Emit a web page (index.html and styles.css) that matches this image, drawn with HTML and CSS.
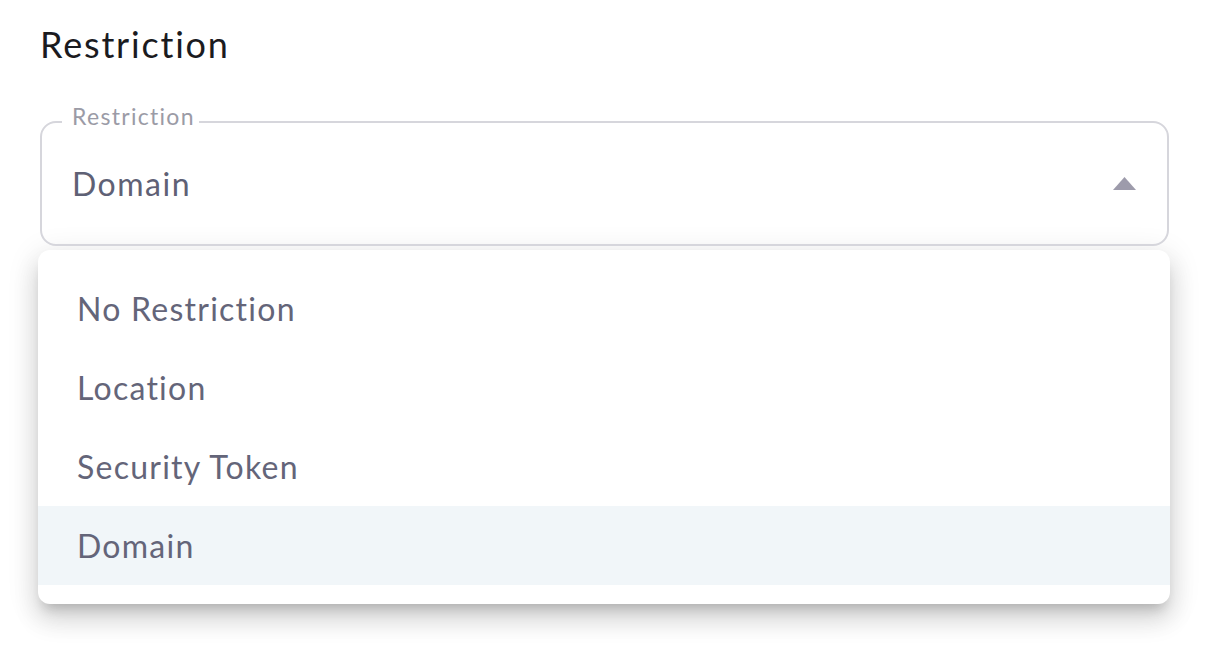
FILE: index.html
```html
<!DOCTYPE html>
<html>
<head>
<meta charset="utf-8">
<link rel="stylesheet" href="styles.css">
</head>
<body>
<div class="page">
  <h1 class="title">Restriction</h1>
  <div class="field">
    <span class="field-label">Restriction</span>
    <span class="field-value">Domain</span>
    <svg class="arrow" width="23" height="13" viewBox="0 0 23 13"><path d="M0 13 L11.5 0 L23 13 Z" fill="#9d9bab"/></svg>
  </div>
  <ul class="menu">
    <li class="item">No Restriction</li>
    <li class="item">Location</li>
    <li class="item">Security Token</li>
    <li class="item selected">Domain</li>
  </ul>
</div>
</body>
</html>
```
FILE: styles.css
```css
* { box-sizing: border-box; }
html, body { margin: 0; padding: 0; background: #fff; }
body { font-family: Lato, "Open Sans", sans-serif; }
.page { padding: 22px 39px 60px 40px; }
.title {
  margin: 0;
  font-size: 36px;
  line-height: 44px;
  font-weight: 400;
  letter-spacing: 1.8px;
  color: #1b1b1f;
}
.field {
  position: relative;
  margin-top: 55px;
  height: 125px;
  border: 2px solid #d6d6dc;
  border-radius: 16px;
  display: flex;
  align-items: center;
  justify-content: space-between;
  padding: 0 31px 0 30px;
}
.field-label {
  position: absolute;
  left: 20px;
  top: -21px;
  padding: 0 4px 0 10px;
  background: #fff;
  font-size: 23px;
  line-height: 28px;
  letter-spacing: 1.3px;
  color: #9b9ba6;
}
.field-value {
  font-size: 32px;
  letter-spacing: 1.5px;
  color: #5f6175;
}
.arrow { display: block; }
.menu {
  list-style: none;
  margin: 4px -1px 0 -2px;
  padding: 19px 0;
  background: #fff;
  border-radius: 12px;
  box-shadow: 0 10px 12px -6px rgba(0,0,0,.18), 0 16px 24px 2px rgba(0,0,0,.11), 0 6px 30px 4px rgba(0,0,0,.09);
}
.item {
  height: 79px;
  display: flex;
  align-items: center;
  padding-left: 39px;
  font-size: 32px;
  letter-spacing: 1.25px;
  color: #646579;
}
.item.selected { background: #f1f6f9; }
```
